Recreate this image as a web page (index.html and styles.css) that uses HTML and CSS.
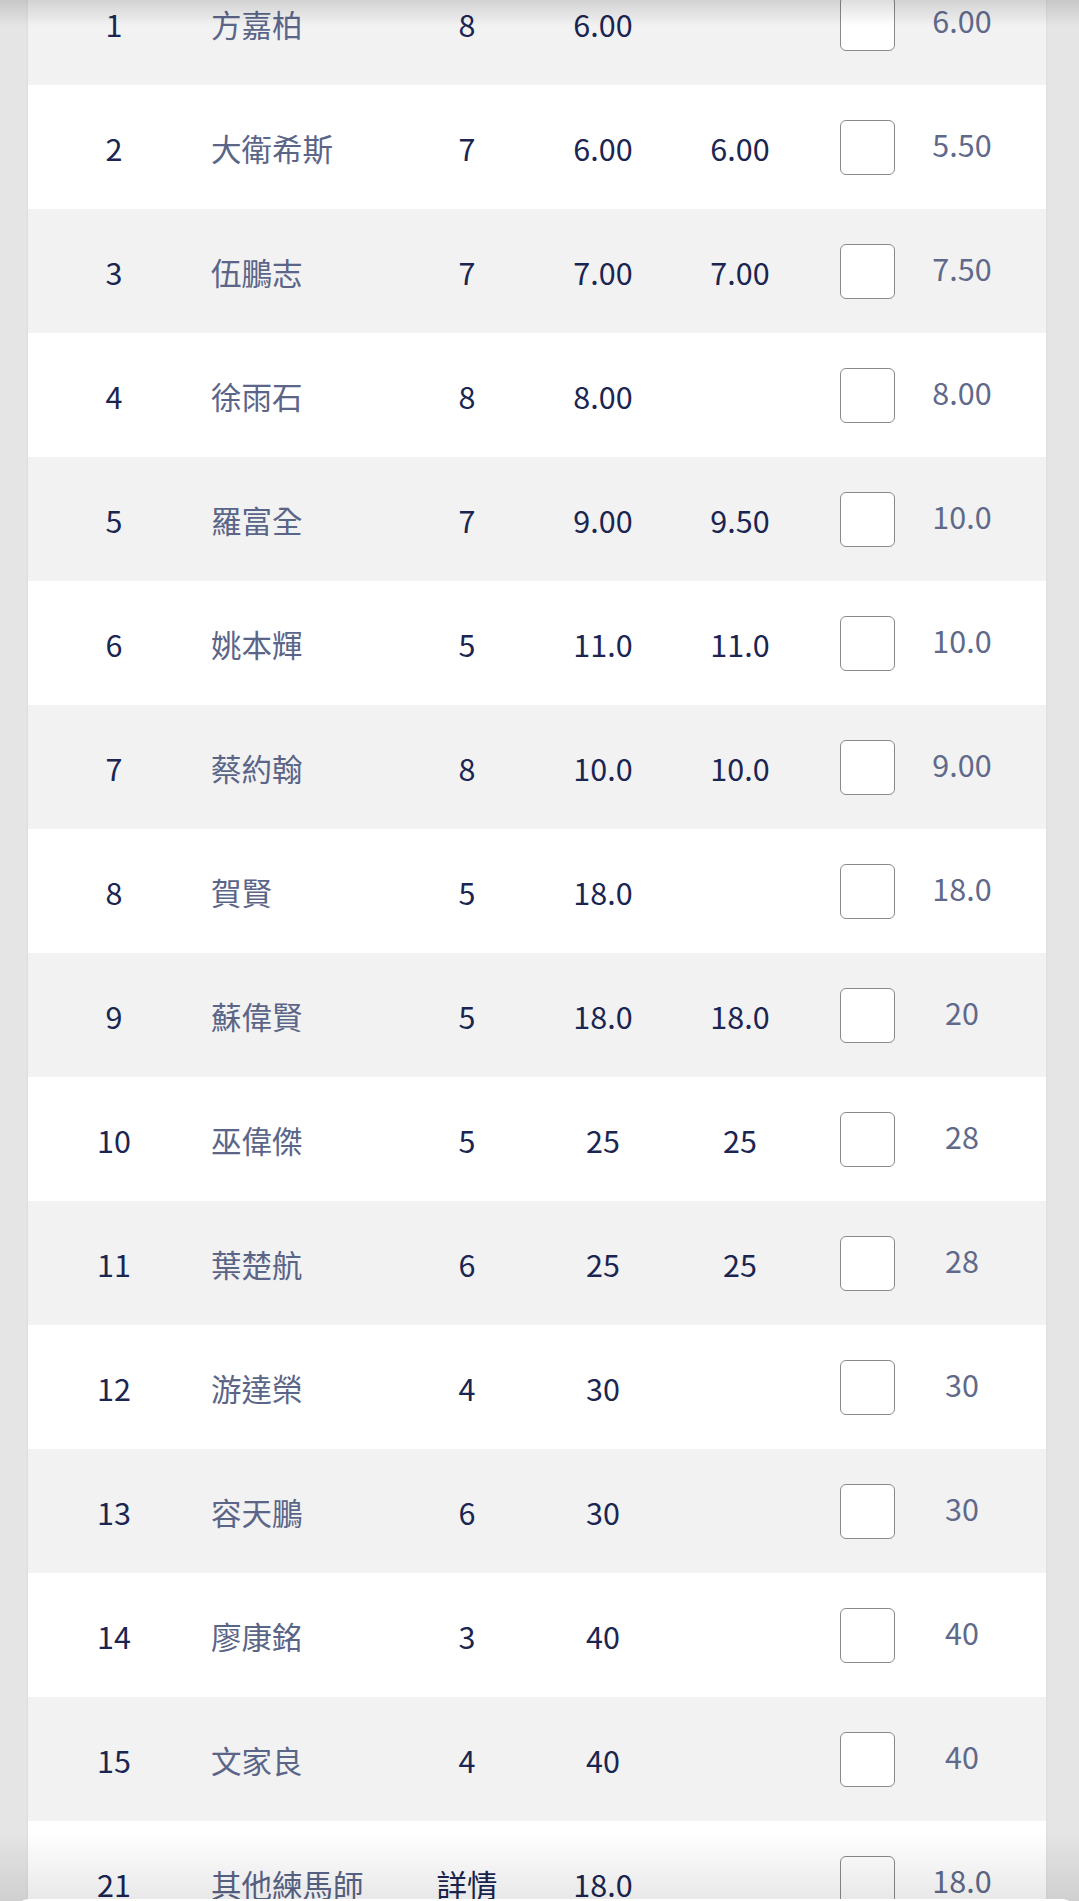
FILE: index.html
```html
<!DOCTYPE html>
<html lang="zh-Hant">
<head>
<meta charset="utf-8">
<title>練馬師</title>
<link rel="stylesheet" href="styles.css">
</head>
<body>
<div class="page">
  <div class="panel">
    <div class="row odd"><span class="c-no">1</span><span class="c-name">方嘉柏</span><span class="c-cnt">8</span><span class="c-a">6.00</span><span class="c-b"></span><span class="c-sel"><span class="box"></span><span class="odds">6.00</span></span></div>
    <div class="row"><span class="c-no">2</span><span class="c-name">大衛希斯</span><span class="c-cnt">7</span><span class="c-a">6.00</span><span class="c-b">6.00</span><span class="c-sel"><span class="box"></span><span class="odds">5.50</span></span></div>
    <div class="row odd"><span class="c-no">3</span><span class="c-name">伍鵬志</span><span class="c-cnt">7</span><span class="c-a">7.00</span><span class="c-b">7.00</span><span class="c-sel"><span class="box"></span><span class="odds">7.50</span></span></div>
    <div class="row"><span class="c-no">4</span><span class="c-name">徐雨石</span><span class="c-cnt">8</span><span class="c-a">8.00</span><span class="c-b"></span><span class="c-sel"><span class="box"></span><span class="odds">8.00</span></span></div>
    <div class="row odd"><span class="c-no">5</span><span class="c-name">羅富全</span><span class="c-cnt">7</span><span class="c-a">9.00</span><span class="c-b">9.50</span><span class="c-sel"><span class="box"></span><span class="odds">10.0</span></span></div>
    <div class="row"><span class="c-no">6</span><span class="c-name">姚本輝</span><span class="c-cnt">5</span><span class="c-a">11.0</span><span class="c-b">11.0</span><span class="c-sel"><span class="box"></span><span class="odds">10.0</span></span></div>
    <div class="row odd"><span class="c-no">7</span><span class="c-name">蔡約翰</span><span class="c-cnt">8</span><span class="c-a">10.0</span><span class="c-b">10.0</span><span class="c-sel"><span class="box"></span><span class="odds">9.00</span></span></div>
    <div class="row"><span class="c-no">8</span><span class="c-name">賀賢</span><span class="c-cnt">5</span><span class="c-a">18.0</span><span class="c-b"></span><span class="c-sel"><span class="box"></span><span class="odds">18.0</span></span></div>
    <div class="row odd"><span class="c-no">9</span><span class="c-name">蘇偉賢</span><span class="c-cnt">5</span><span class="c-a">18.0</span><span class="c-b">18.0</span><span class="c-sel"><span class="box"></span><span class="odds">20</span></span></div>
    <div class="row"><span class="c-no">10</span><span class="c-name">巫偉傑</span><span class="c-cnt">5</span><span class="c-a">25</span><span class="c-b">25</span><span class="c-sel"><span class="box"></span><span class="odds">28</span></span></div>
    <div class="row odd"><span class="c-no">11</span><span class="c-name">葉楚航</span><span class="c-cnt">6</span><span class="c-a">25</span><span class="c-b">25</span><span class="c-sel"><span class="box"></span><span class="odds">28</span></span></div>
    <div class="row"><span class="c-no">12</span><span class="c-name">游達榮</span><span class="c-cnt">4</span><span class="c-a">30</span><span class="c-b"></span><span class="c-sel"><span class="box"></span><span class="odds">30</span></span></div>
    <div class="row odd"><span class="c-no">13</span><span class="c-name">容天鵬</span><span class="c-cnt">6</span><span class="c-a">30</span><span class="c-b"></span><span class="c-sel"><span class="box"></span><span class="odds">30</span></span></div>
    <div class="row"><span class="c-no">14</span><span class="c-name">廖康銘</span><span class="c-cnt">3</span><span class="c-a">40</span><span class="c-b"></span><span class="c-sel"><span class="box"></span><span class="odds">40</span></span></div>
    <div class="row odd"><span class="c-no">15</span><span class="c-name">文家良</span><span class="c-cnt">4</span><span class="c-a">40</span><span class="c-b"></span><span class="c-sel"><span class="box"></span><span class="odds">40</span></span></div>
    <div class="row"><span class="c-no">21</span><span class="c-name">其他練馬師</span><span class="c-cnt detail">詳情</span><span class="c-a">18.0</span><span class="c-b"></span><span class="c-sel"><span class="box"></span><span class="odds">18.0</span></span></div>
  </div>
</div>
<div class="top-shade"></div>
<div class="bottom-shade"></div>
<div class="sheet"></div>
</body>
</html>
```

FILE: styles.css
```css
html, body {
  margin: 0;
  padding: 0;
}
body {
  background: #e5e5e5;
  font-family: "Noto Sans CJK TC", "Noto Sans", sans-serif;
  height: 1901px;
  overflow: hidden;
}
.page {
  padding: 0 33px 0 28px;
}
.panel {
  margin-top: -39px;
  background: #ffffff;
  box-shadow: 0 0 3px rgba(0,0,0,0.06);
}
.row {
  display: grid;
  grid-template-columns: 172px 206px 122px 150px 124px 1fr;
  align-items: center;
  height: 124px;
  background: #ffffff;
  font-size: 30.5px;
  color: #1b2551;
}
.row.odd {
  background: #f2f2f2;
}
.c-no, .c-cnt, .c-a, .c-b {
  text-align: center;
  white-space: nowrap;
  padding-top: 1px;
}
.c-name {
  color: #5a6588;
  padding-left: 11px;
  padding-top: 1px;
  white-space: nowrap;
}
.detail {
  color: #1b2551;
}
.c-sel {
  display: flex;
  align-items: center;
  padding-left: 38px;
}
.box {
  width: 53px;
  height: 53px;
  border: 1.5px solid #8a8a8a;
  border-radius: 6px;
  background: #ffffff;
  flex: none;
}
.odds {
  width: 80px;
  margin-left: 27px;
  margin-bottom: 7px;
  text-align: center;
  color: #5f6a8b;
}
.top-shade {
  position: fixed;
  top: 0;
  left: 0;
  right: 0;
  height: 26px;
  background: linear-gradient(to bottom, rgba(0,0,0,0.13), rgba(0,0,0,0));
  pointer-events: none;
}
.bottom-shade {
  position: fixed;
  bottom: 0;
  left: 0;
  right: 0;
  height: 70px;
  background: linear-gradient(to top, rgba(0,0,0,0.09), rgba(0,0,0,0));
  pointer-events: none;
}
.sheet {
  position: fixed;
  bottom: -20px;
  left: 12px;
  right: 0;
  height: 22px;
  background: #ffffff;
  border-radius: 18px 18px 0 0;
}
```
